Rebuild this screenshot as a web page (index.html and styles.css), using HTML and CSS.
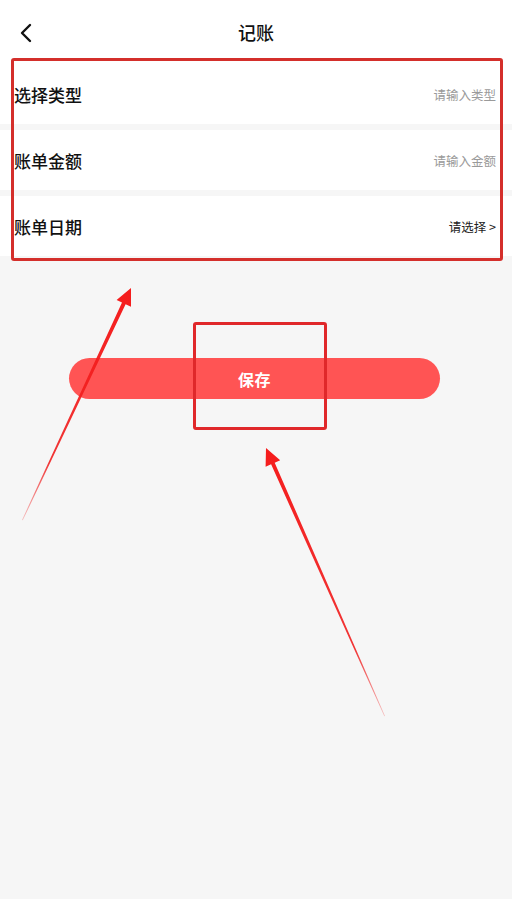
FILE: index.html
```html
<!DOCTYPE html>
<html lang="zh-CN">
<head>
<meta charset="utf-8">
<title>记账</title>
<link rel="stylesheet" href="styles.css">
</head>
<body>
<div class="page">
  <header class="nav">
    <span class="back">
      <svg width="14" height="20" viewBox="0 0 14 20"><path d="M11 2 L3 10 L11 18" fill="none" stroke="#111" stroke-width="2.4" stroke-linecap="round" stroke-linejoin="round"/></svg>
    </span>
    <h1 class="title">记账</h1>
  </header>

  <section class="form">
    <div class="row">
      <span class="label">选择类型</span>
      <span class="hint">请输入类型</span>
    </div>
    <div class="row">
      <span class="label">账单金额</span>
      <span class="hint">请输入金额</span>
    </div>
    <div class="row">
      <span class="label">账单日期</span>
      <span class="pick">请选择 &gt;</span>
    </div>
  </section>

  <div class="actions">
    <button class="save">保存</button>
  </div>

  <div class="mark mark-form"></div>
  <div class="mark mark-btn"></div>

  <svg class="arrows" width="512" height="899" viewBox="0 0 512 899">
    <defs>
      <linearGradient id="g1" x1="22" y1="520" x2="131" y2="288" gradientUnits="userSpaceOnUse">
        <stop offset="0" stop-color="#f02020" stop-opacity="0.25"/>
        <stop offset="0.25" stop-color="#f02020" stop-opacity="0.9"/>
        <stop offset="1" stop-color="#f51c1c"/>
      </linearGradient>
      <linearGradient id="g2" x1="385" y1="716" x2="266" y2="448" gradientUnits="userSpaceOnUse">
        <stop offset="0" stop-color="#f02020" stop-opacity="0.25"/>
        <stop offset="0.25" stop-color="#f02020" stop-opacity="0.9"/>
        <stop offset="1" stop-color="#f51c1c"/>
      </linearGradient>
    </defs>
    <polygon fill="url(#g1)" points="22,520 122,302.6 116.6,300 131,288 131,306.8 125.6,304.3 22.8,520.3"/>
    <polygon fill="url(#g2)" points="385,716 274.7,462.7 280.2,460.3 266,448 265.6,466.7 271.1,464.3 384.3,716.3"/>
  </svg>
</div>
</body>
</html>
```

FILE: styles.css
```css
* { box-sizing: border-box; }

html, body {
  margin: 0;
  padding: 0;
  background: #f6f6f6;
}

body {
  font-family: "Noto Sans CJK SC", "Noto Sans", sans-serif;
  color: #111;
}

.page {
  position: relative;
  width: 512px;
  min-height: 899px;
  background: #f6f6f6;
}

.nav {
  position: relative;
  height: 64px;
  background: #fff;
  display: flex;
  align-items: center;
  justify-content: center;
}

.back {
  position: absolute;
  left: 19px;
  top: 23px;
  display: flex;
}

.title {
  margin: 0;
  font-size: 18px;
  font-weight: 500;
  color: #111;
  line-height: 1;
  padding-bottom: 0;
}

.form {
  display: flex;
  flex-direction: column;
  gap: 6px;
}

.row {
  height: 60px;
  background: #fff;
  display: flex;
  align-items: center;
  justify-content: space-between;
  padding: 0 16px 0 14px;
}

.label {
  font-size: 17px;
  font-weight: 500;
  color: #111;
}

.hint {
  font-size: 12.5px;
  color: #9a9a9a;
}

.pick {
  font-size: 12.5px;
  color: #222;
}

.actions {
  display: flex;
  justify-content: center;
  padding-top: 102px;
}

.save {
  width: 371px;
  height: 41px;
  margin-left: -3px;
  border: none;
  border-radius: 21px;
  background: #ff5454;
  color: #fff;
  font-family: "Noto Sans CJK SC", sans-serif;
  font-size: 16px;
  font-weight: 700;
  letter-spacing: 0.5px;
}

.mark {
  position: absolute;
  border-style: solid;
  border-radius: 3px;
}

.mark-form {
  left: 11px;
  top: 58px;
  width: 492px;
  height: 203px;
  border-width: 3.5px;
  border-color: #d42f2b;
}

.mark-btn {
  left: 193px;
  top: 322px;
  width: 134px;
  height: 108px;
  border-width: 3px;
  border-color: #e0282a;
}

.arrows {
  position: absolute;
  left: 0;
  top: 0;
  pointer-events: none;
}
```
